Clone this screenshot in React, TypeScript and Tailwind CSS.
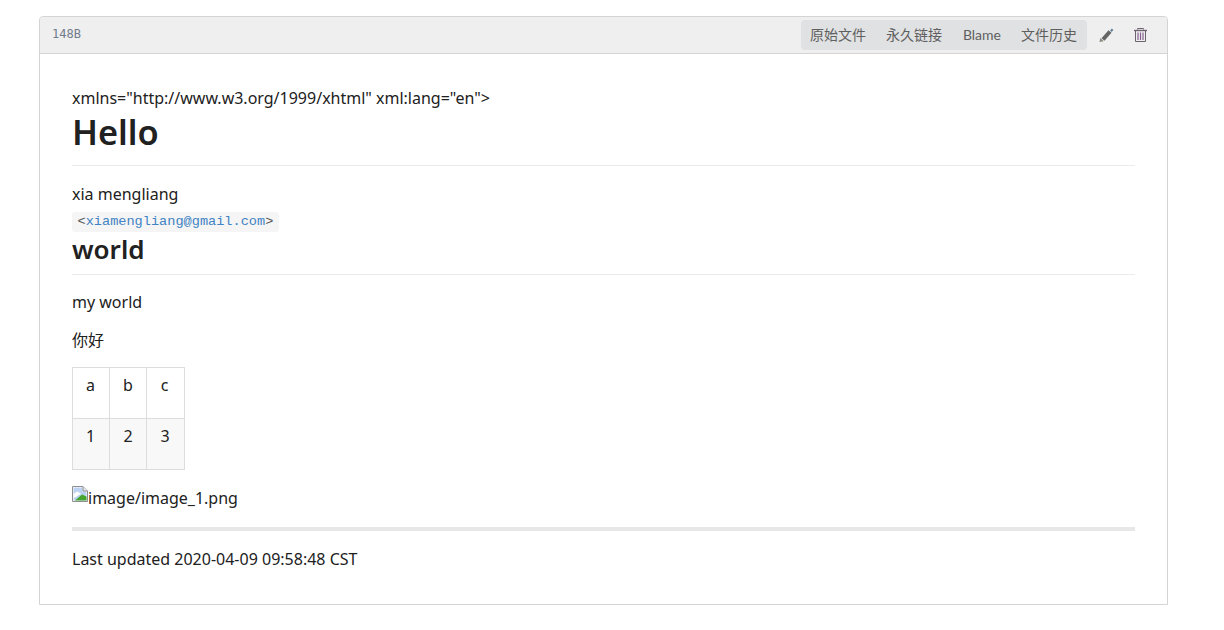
const sans = "font-['Noto_Sans','Noto_Sans_CJK_SC',sans-serif]";

function BrokenImage() {
  return (
    <svg width="16" height="16" viewBox="0 0 16 16" className="inline-block align-[2px]">
      <path d="M0.5 0.5H11L15.5 5V15.5H0.5Z" fill="#fff" stroke="#8f8f8f" />
      <path d="M1.500 1.500H10.500V5.500H14.500V14.500H1.500Z" fill="#bcd2f2" />
      <path d="M1.500 8L5 5.500L9 7.500L4 11L1.500 12Z" fill="#fff" />
      <path d="M3 14.500L10 8.500L14.500 10.500V14.500Z" fill="#46a52f" />
      <path d="M11 0.5V5H15.5" fill="#e8e8e8" stroke="#8f8f8f" />
    </svg>
  );
}

function PencilIcon() {
  return (
    <svg width="15" height="14" viewBox="0 0 15 14" fill="none">
      <path d="M4 11.500L11 3.500" stroke="#666" strokeWidth="4" />
      <path d="M12 1.500L13.500 3" stroke="#5d7f9c" strokeWidth="2.500" />
      <path d="M0.500 14L1.200 10L4.800 13.200Z" fill="#8a8a80" />
    </svg>
  );
}

function TrashIcon() {
  return (
    <svg width="13" height="14" viewBox="0 0 13 14" fill="none" stroke="#6f6270">
      <path d="M3.500 1.500V0.500H9.500V1.500" />
      <path d="M0 2.500H13" strokeWidth="1.400" />
      <path d="M1.500 3V13.500H11.500V3" />
      <path d="M4 4.500V12M6.500 4.500V12M9 4.500V12" stroke="#86608f" strokeWidth="1.200" />
    </svg>
  );
}

export default function App() {
  const cell = "border border-[#dddddd] w-[37px] p-0 pt-[5px] pb-[21px] text-center leading-[24px] align-top";
  return (
    <div className={`${sans} bg-white min-h-[630px] pt-[16px] pl-[39px] pr-[56px] text-[16px] text-[#212121]`}>
      <div className="border border-[#d4d4d5] rounded-t-[4px] h-[589px]">
        <div className="h-[37px] bg-[#efefef] border-b border-[#d4d4d5] rounded-t-[4px] flex items-center justify-between pl-[12px] pr-[20px]">
          <span className="font-['DejaVu_Sans_Mono',monospace] text-[12px] text-[#6f7c8c] pb-[2px]">148B</span>
          <div className="flex items-center">
            <div className="flex items-center h-[30px] bg-[#e0e1e2] rounded-[4px] pl-[9px] pr-[10px] pb-[2px] gap-[20px] text-[14px] text-[#5f5f5f] font-['Lato','Noto_Sans_CJK_SC',sans-serif]">
              <span>原始文件</span>
              <span>永久链接</span>
              <span className="pt-[1px] ml-[1px]">Blame</span>
              <span>文件历史</span>
            </div>
            <div className="flex items-center ml-[12px] gap-[20px]">
              <PencilIcon />
              <TrashIcon />
            </div>
          </div>
        </div>
        <div className="px-[32px] pt-[32px]">
          <div className="leading-[24px]">xmlns="http://www.w3.org/1999/xhtml" xml:lang="en"&gt;</div>
          <h1 className="text-[34.400px] font-semibold leading-[44px] pb-[11px] border-b border-[#eaecef]">Hello</h1>
          <div className="leading-[24px] mt-[16px]">xia mengliang</div>
          <div className="leading-[20px] mt-[3px]">
            <span className="inline-block h-[20px] px-[5.500px] bg-[#f5f5f5] rounded-[3px] font-['Liberation_Mono',monospace] text-[13.600px] leading-[20px] text-[#555]">
              &lt;<span className="text-[#4183c4]">xiamengliang@gmail.com</span>&gt;
            </span>
          </div>
          <h2 className="text-[26px] font-semibold leading-[34px] pb-[8px] border-b border-[#eaecef]">world</h2>
          <p className="leading-[24px] mt-[15px]">my world</p>
          <p className="leading-[24px] mt-[14px]">你好</p>
          <table className="mt-[15px] border-collapse">
            <tbody>
              <tr>
                <td className={`${cell} pr-[1px]`}>a</td>
                <td className={cell}>b</td>
                <td className={`${cell} w-[38px] pr-[2px]`}>c</td>
              </tr>
              <tr className="bg-[#f8f8f8]">
                <td className={`${cell} pr-[1px]`}>1</td>
                <td className={cell}>2</td>
                <td className={`${cell} w-[38px] pr-[1px]`}>3</td>
              </tr>
            </tbody>
          </table>
          <p className="leading-[24px] mt-[16px]"><BrokenImage />image/image_1.png</p>
          <div className="h-[4px] bg-[#e7e7e7] mt-[17px]" />
          <p className="leading-[24px] mt-[16px]">Last updated 2020-04-09 09:58:48 CST</p>
        </div>
      </div>
    </div>
  );
}
